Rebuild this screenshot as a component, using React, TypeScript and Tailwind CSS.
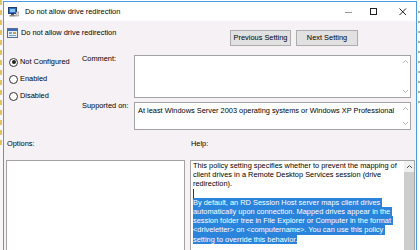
import React from "react";

function Chevron({ up, color }: { up: boolean; color: string }) {
  return (
    <svg width="7" height="5" viewBox="0 0 7 5">
      <path
        d={up ? "M1 4 L3.5 1.5 L6 4" : "M1 1 L3.5 3.5 L6 1"}
        stroke={color}
        strokeWidth="1"
        fill="none"
      />
    </svg>
  );
}

function Radio({ label, checked }: { label: string; checked?: boolean }) {
  return (
    <div className="flex h-[10px] shrink-0 items-center gap-[2px]">
      <div className="flex h-[9px] w-[9px] items-center justify-center rounded-full border border-[#333] bg-white">
        {checked && <div className="h-[4px] w-[4px] rounded-full bg-[#222]" />}
      </div>
      <span>{label}</span>
    </div>
  );
}

function TextBox({ h, children }: { h: string; children?: React.ReactNode }) {
  return (
    <div className={`flex ${h} shrink-0 border border-[#a3a3a3] bg-white`}>
      <div className="flex-1 pl-[2px] pt-[3px]">{children}</div>
      <div className="flex w-[10px] flex-col items-center justify-between py-[3px]">
        <Chevron up color="#b8b8b8" />
        <Chevron up={false} color="#b8b8b8" />
      </div>
    </div>
  );
}

const helpPlain = [
  "This policy setting specifies whether to prevent the mapping of",
  "client drives in a Remote Desktop Services session (drive",
  "redirection).",
];

const helpSelected = [
  "By default, an RD Session Host server maps client drives ",
  "automatically upon connection. Mapped drives appear in the ",
  "session folder tree in File Explorer or Computer in the format ",
  "<driveletter> on <computername>. You can use this policy ",
  "setting to override this behavior.",
];

export default function App() {
  return (
    <div className="flex h-[250px] w-[420px] overflow-hidden bg-white font-['Liberation_Sans',Arial,sans-serif] text-[7.4px] leading-[10px] text-black">
      {/* desktop strip on the left */}
      <div className="flex w-[3px] shrink-0 flex-col gap-[5px] bg-[#f7f7f7]">
        {Array.from({ length: 15 }).map((_, i) => (
          <div key={i} className="h-[5px] w-[2px] shrink-0 bg-[#e6c25c]" />
        ))}
      </div>

      {/* window */}
      <div className="mt-[1px] flex w-[414px] shrink-0 flex-col overflow-hidden border-x border-t border-[#4a9be0] bg-[#f5f1f5]">
        {/* title bar */}
        <div className="flex h-[19px] shrink-0 items-center bg-white">
          <svg className="ml-[4px]" width="11" height="10" viewBox="0 0 11 10">
            <rect x="0.5" y="0.5" width="8" height="6" fill="#2f6fc4" stroke="#1d3f73" />
            <rect x="2" y="2" width="5" height="3" fill="#8cc4f5" />
            <rect x="3" y="7" width="3" height="1" fill="#555" />
            <rect x="1.5" y="8" width="6" height="1.5" fill="#888" />
            <rect x="8" y="5" width="3" height="4" fill="#d9d9d9" stroke="#777" strokeWidth="0.5" />
          </svg>
          <span className="ml-[6px]">Do not allow drive redirection</span>
          <div className="ml-auto flex items-center">
            <svg width="8" height="8" viewBox="0 0 8 8" className="mr-[17px]">
              <path d="M0 4.5 H7" stroke="#999" strokeWidth="1" />
            </svg>
            <svg width="8" height="8" viewBox="0 0 8 8" className="mr-[21px]">
              <rect x="0.5" y="0.5" width="6" height="6" fill="none" stroke="#222" strokeWidth="1" />
            </svg>
            <svg width="8" height="8" viewBox="0 0 8 8" className="mr-[9px]">
              <path d="M0.5 0.5 L7 7 M7 0.5 L0.5 7" stroke="#222" strokeWidth="1" />
            </svg>
          </div>
        </div>

        {/* header row */}
        <div className="mt-[7px] flex h-[18px] shrink-0 items-start">
          <div className="ml-[3px] flex h-[10px] items-center">
            <svg width="11" height="10" viewBox="0 0 11 10">
              <rect x="0.5" y="0.5" width="10" height="9" fill="#e9eef5" stroke="#4f6f96" />
              <rect x="1" y="1" width="9" height="2" fill="#3a6db3" />
              <rect x="2" y="4" width="3" height="2" fill="#7aa0cc" />
              <rect x="6" y="4" width="3" height="2" fill="#c9a24a" />
              <rect x="2" y="7" width="7" height="1" fill="#7aa0cc" />
            </svg>
            <span className="ml-[3px]">Do not allow drive redirection</span>
          </div>
          <div className="ml-auto mr-[58px] mt-[2px] flex gap-[5px]">
            <div className="flex h-[16px] w-[61px] items-center justify-center border border-[#adadad] bg-[#e1e1e1]">
              Previous Setting
            </div>
            <div className="flex h-[16px] w-[62px] items-center justify-center border border-[#adadad] bg-[#e1e1e1]">
              Next Setting
            </div>
          </div>
        </div>

        {/* settings row */}
        <div className="mt-[9px] flex shrink-0">
          <div className="flex w-[78px] flex-col gap-[7px] pl-[5px] pt-[2px]">
            <Radio label="Not Configured" checked />
            <Radio label="Enabled" />
            <Radio label="Disabled" />
          </div>
          <div className="flex w-[52px] flex-col">
            <div className="mt-[-1px] h-[10px] shrink-0">Comment:</div>
            <div className="mt-[37px] h-[10px] shrink-0">Supported on:</div>
          </div>
          <div className="flex w-[277px] flex-col gap-[4px]">
            <TextBox h="h-[43px]" />
            <TextBox h="h-[28px]">
              <span className="ml-[1px]">
                At least Windows Server 2003 operating systems or Windows XP Professional
              </span>
            </TextBox>
          </div>
        </div>

        {/* labels */}
        <div className="mt-[9px] flex h-[10px] shrink-0">
          <span className="ml-[3px] w-[184px]">Options:</span>
          <span>Help:</span>
        </div>

        {/* boxes */}
        <div className="mt-[11px] flex shrink-0">
          <div className="ml-[2px] h-[100px] w-[179px] border border-[#a3a3a3] bg-white" />
          <div className="ml-[5px] flex h-[100px] w-[225px] border border-[#a3a3a3] bg-white">
            <div className="flex-1 pl-[2px] leading-[9.2px]">
              {helpPlain.map((l) => (
                <div key={l} className="h-[9.2px] whitespace-pre">
                  {l}
                </div>
              ))}
              <div className="flex h-[9.2px] items-center">
                <div className="h-[9px] w-[1px] bg-[#333]" />
              </div>
              {helpSelected.map((l) => (
                <div key={l} className="h-[9.2px]">
                  <span className="inline-block h-[9.2px] whitespace-pre bg-[#2a84dc] text-white">
                    {l}
                  </span>
                </div>
              ))}
            </div>
            <div className="flex w-[10px] flex-col">
              <div className="flex h-[11px] shrink-0 items-center justify-center bg-[#f0f0f0]">
                <Chevron up color="#505050" />
              </div>
              <div className="flex-1 bg-[#cdcdcd]" />
            </div>
          </div>
        </div>
      </div>

      {/* desktop strip on the right */}
      <div className="flex w-[3px] shrink-0 flex-col gap-[8px] bg-white pl-[1px] pt-[11px]">
        {Array.from({ length: 10 }).map((_, i) => (
          <div key={i} className="h-[2px] w-[2px] shrink-0 rounded-full bg-[#8a8a8a]" />
        ))}
      </div>
    </div>
  );
}
